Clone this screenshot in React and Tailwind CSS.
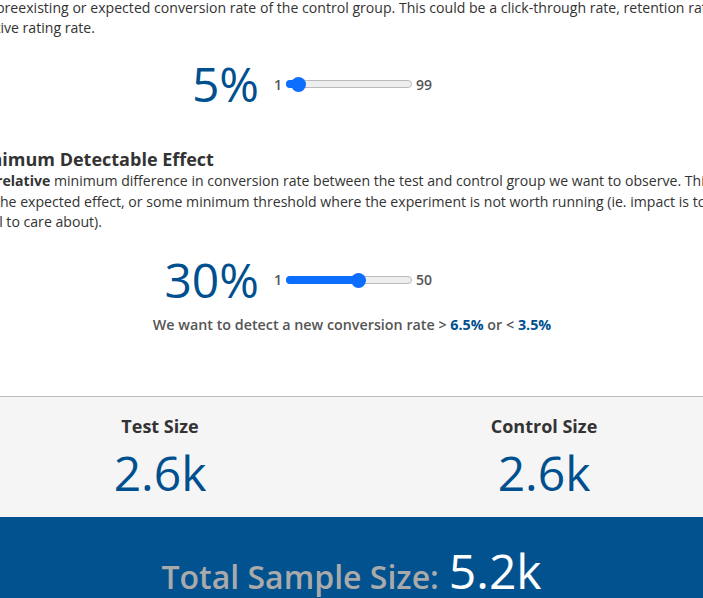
import React from 'react'

const font = { fontFamily: '"Open Sans", "Liberation Sans", sans-serif' }

function Slider({ min, max, value }) {
  // thumb travel is track width minus thumb size
  const pct = (value - min) / (max - min)
  return (
    <div className="flex items-center">
      <span className="mr-[4px] text-[14px] font-semibold text-[#555]">{min}</span>
      <div className="relative h-[8px] w-[126px] rounded-full border border-[#bbb] bg-[#eee]">
        <div
          className="absolute left-[-1px] top-[-1px] h-[8px] rounded-full bg-[#0d6efd]"
          style={{ width: `calc(${pct} * (100% - 14px) + 9px)` }}
        />
        <div
          className="absolute top-[-4px] h-[15px] w-[15px] rounded-full bg-[#0d6efd]"
          style={{ left: `calc(${pct} * (100% - 14px) - 1px)` }}
        />
      </div>
      <span className="ml-[4px] text-[14px] font-semibold text-[#555]">{max}</span>
    </div>
  )
}

function ValueRow({ label, min, max, value }) {
  return (
    <div className="flex items-center gap-[15px] pl-[120px]">
      <div className="w-[171px] text-right text-[48px] leading-none text-[#00508f]">{label}</div>
      <Slider min={min} max={max} value={value} />
    </div>
  )
}

export default function App() {
  return (
    <div className="w-full overflow-hidden bg-white text-[#333]" style={font}>
      <div className="ml-[-32px] w-[768px]">
        <p className="mt-[-2px] whitespace-nowrap text-[14.1px] leading-[20px]">
          The preexisting or expected conversion rate of the control group. This could be a click-through rate, retention rate, or
          <br />
          positive rating rate.
        </p>

        <div className="mt-[22px]">
          <ValueRow label="5%" min={1} max={99} value={5} />
        </div>

        <h3 className="mt-[39px] text-[18px] font-bold leading-[24px] text-[#333]">Minimum Detectable Effect</h3>
        <p className="whitespace-nowrap text-[14.1px] leading-[20.5px]">
          The <b>relative</b> minimum difference in conversion rate between the test and control group we want to observe. This
          <br />
          use the expected effect, or some minimum threshold where the experiment is not worth running (ie. impact is too
          <br />
          small to care about).
        </p>

        <div className="mt-[23px]">
          <ValueRow label="30%" min={1} max={50} value={30} />
        </div>

        <p className="mt-[10px] text-center text-[14.3px] font-semibold leading-[21px] text-[#555]">
          We want to detect a new conversion rate &gt; <span className="font-bold text-[#00508f]">6.5%</span> or &lt;{' '}
          <span className="font-bold text-[#00508f]">3.5%</span>
        </p>
      </div>

      <div className="mt-[61px] border-t border-[#bdbdbd] bg-[#f5f5f5]">
        <div className="ml-[-32px] grid w-[768px] grid-cols-2 pb-[20px] pt-[17px]">
          <div className="flex flex-col items-center">
            <div className="text-[18px] font-bold leading-[24px] text-[#333]">Test Size</div>
            <div className="mt-[11px] text-[48px] leading-none text-[#00508f]">2.6k</div>
          </div>
          <div className="flex flex-col items-center">
            <div className="text-[18px] font-bold leading-[24px] text-[#333]">Control Size</div>
            <div className="mt-[11px] text-[48px] leading-none text-[#00508f]">2.6k</div>
          </div>
        </div>
      </div>

      <div className="bg-[#02528f] pb-[40px] pt-[30px]">
        <div className="flex items-baseline justify-center gap-[10px]">
          <span className="text-[32px] font-semibold text-[#aaa]">Total Sample Size:</span>
          <span className="text-[48px] leading-none text-white">5.2k</span>
        </div>
      </div>
    </div>
  )
}
